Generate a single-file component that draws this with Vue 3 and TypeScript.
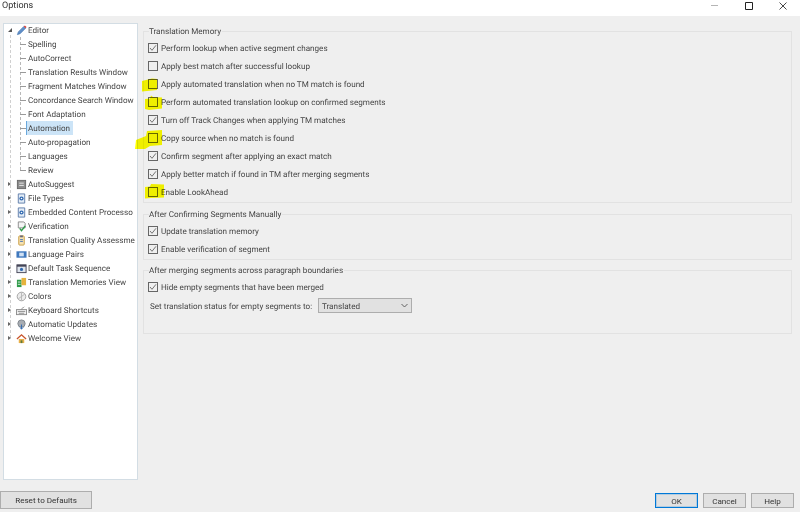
<script setup lang="ts">
interface Row { label: string; checked: boolean }
interface Node { label: string; icon: string }

const children: string[] = [
  'Spelling', 'AutoCorrect', 'Translation Results Window', 'Fragment Matches Window',
  'Concordance Search Window', 'Font Adaptation', 'Automation', 'Auto-propagation',
  'Languages', 'Review',
]
const roots: Node[] = [
  { label: 'AutoSuggest', icon: 'suggest' },
  { label: 'File Types', icon: 'file' },
  { label: 'Embedded Content Processo', icon: 'file' },
  { label: 'Verification', icon: 'verify' },
  { label: 'Translation Quality Assessme', icon: 'quality' },
  { label: 'Language Pairs', icon: 'pairs' },
  { label: 'Default Task Sequence', icon: 'task' },
  { label: 'Translation Memories View', icon: 'tm' },
  { label: 'Colors', icon: 'colors' },
  { label: 'Keyboard Shortcuts', icon: 'keyboard' },
  { label: 'Automatic Updates', icon: 'updates' },
  { label: 'Welcome View', icon: 'home' },
]
const tm: Row[] = [
  { label: 'Perform lookup when active segment changes', checked: true },
  { label: 'Apply best match after successful lookup', checked: false },
  { label: 'Apply automated translation when no TM match is found', checked: false },
  { label: 'Perform automated translation lookup on confirmed segments', checked: false },
  { label: 'Turn off Track Changes when applying TM matches', checked: true },
  { label: 'Copy source when no match is found', checked: false },
  { label: 'Confirm segment after applying an exact match', checked: true },
  { label: 'Apply better match if found in TM after merging segments', checked: true },
  { label: 'Enable LookAhead', checked: false },
]
const confirming: Row[] = [
  { label: 'Update translation memory', checked: true },
  { label: 'Enable verification of segment', checked: true },
]
</script>

<template>
  <div class="window">
    <header class="titlebar">
      <span class="title">Options</span>
      <div class="controls">
        <svg width="90" height="12" viewBox="0 0 90 12">
          <path d="M1 5.500h7" stroke="#b5b5b5" stroke-width="1" fill="none" />
          <path d="M35.500 2.500h7v7h-7z" stroke="#222" stroke-width="1" fill="none" />
          <path d="M69.500 2.500l7 7M76.500 2.500l-7 7" stroke="#333" stroke-width="0.900" fill="none" />
        </svg>
      </div>
    </header>

    <main class="body">
      <nav class="tree">
        <div class="guide"></div>
        <div class="node root">
          <span class="arrow open"></span>
          <svg class="icon" viewBox="0 0 12 12">
            <path d="M1.500 10.500l1-3 6-6 2 2-6 6z" fill="#5f8fc9" stroke="#3d6ca8" stroke-width="0.600" />
            <path d="M8.500 1.500l2 2 1-1.200-1.800-1.800z" fill="#d8433c" />
          </svg>
          <span>Editor</span>
        </div>
        <div class="children">
          <div v-for="c in children" :key="c" class="node child">
            <span class="stem"></span>
            <span class="child-label" :class="{ selected: c === 'Automation' }">{{ c }}</span>
          </div>
        </div>
        <div v-for="r in roots" :key="r.label" class="node root">
          <span class="arrow"></span>
          <svg class="icon" viewBox="0 0 12 12">
            <template v-if="r.icon === 'suggest'">
              <rect x="1.500" y="1.500" width="9" height="9" fill="#8c8c8c" stroke="#666" />
              <path d="M3.500 4.500h5M3.500 7h5" stroke="#eee" />
            </template>
            <template v-else-if="r.icon === 'file'">
              <path d="M2.500 1h7v10h-7z" fill="#e4edf7" stroke="#5b7ba8" />
              <circle cx="6" cy="6" r="2.300" fill="#2f68b0" />
              <circle cx="6" cy="6" r="0.900" fill="#fff" />
            </template>
            <template v-else-if="r.icon === 'verify'">
              <path d="M2.500 1h6l1.500 1.500v5H2.500z" fill="#f4f4f4" stroke="#888" />
              <path d="M4 8l2 2.500 4-5" fill="none" stroke="#2f9a4a" stroke-width="1.500" />
            </template>
            <template v-else-if="r.icon === 'quality'">
              <rect x="3" y="1" width="6" height="10" rx="1" fill="#f6e3b4" stroke="#c79a3e" />
              <rect x="4.500" y="0.500" width="3" height="2" fill="#667" />
              <path d="M4.500 5h3M4.500 7h3" stroke="#3f6fb0" />
            </template>
            <template v-else-if="r.icon === 'pairs'">
              <rect x="0.500" y="2.500" width="11" height="7" fill="#3f78bd" />
              <rect x="3.500" y="4" width="5" height="4" fill="#cfe0f3" />
            </template>
            <template v-else-if="r.icon === 'task'">
              <rect x="1" y="2" width="10" height="8.500" fill="#dfe6ee" stroke="#445" />
              <rect x="1" y="2" width="10" height="2" fill="#445" />
              <circle cx="6" cy="7" r="1.700" fill="#2f68b0" />
            </template>
            <template v-else-if="r.icon === 'tm'">
              <rect x="1" y="3" width="5" height="8" fill="#2f9a4a" />
              <path d="M2 5.500h3M2 8h3" stroke="#dff3e3" />
              <rect x="6" y="1" width="5" height="8" fill="#e6b33d" />
            </template>
            <template v-else-if="r.icon === 'colors'">
              <circle cx="6" cy="6" r="4.700" fill="#ececec" stroke="#a0a0a0" />
              <path d="M2.500 8.500l7-5M6 1.500v9" stroke="#b5b5b5" />
            </template>
            <template v-else-if="r.icon === 'keyboard'">
              <rect x="0.500" y="5" width="11" height="5.500" fill="#f2f2f2" stroke="#8a8a8a" />
              <path d="M2 7h8M3 9h6M6 5c0-2 2-1.500 3-3" stroke="#8a8a8a" fill="none" />
            </template>
            <template v-else-if="r.icon === 'updates'">
              <circle cx="6" cy="5" r="4" fill="#a8adb3" stroke="#7d838a" />
              <path d="M6 6v5M4 9l2 2 2-2" stroke="#2f68b0" fill="none" />
            </template>
            <template v-else>
              <path d="M1 6.500L6 2l5 4.500" fill="none" stroke="#c9552c" stroke-width="1.500" />
              <path d="M3 6.500h6v4.500H3z" fill="#e9b04a" />
              <rect x="5" y="8" width="2" height="3" fill="#5d7b3a" />
            </template>
          </svg>
          <span>{{ r.label }}</span>
        </div>
      </nav>

      <section class="panel">
        <div class="group first">
          <div class="legend">Translation Memory</div>
          <label v-for="r in tm" :key="r.label" class="row">
            <span class="box">
              <svg v-if="r.checked" viewBox="0 0 8 8" width="8" height="8">
                <path d="M1 4l2 2.300 4-5" fill="none" stroke="#666" stroke-width="0.900" />
              </svg>
            </span>
            <span>{{ r.label }}</span>
          </label>
        </div>

        <div class="group second">
          <div class="legend">After Confirming Segments Manually</div>
          <label v-for="r in confirming" :key="r.label" class="row">
            <span class="box">
              <svg viewBox="0 0 8 8" width="8" height="8">
                <path d="M1 4l2 2.300 4-5" fill="none" stroke="#666" stroke-width="0.900" />
              </svg>
            </span>
            <span>{{ r.label }}</span>
          </label>
        </div>

        <div class="group third">
          <div class="legend">After merging segments across paragraph boundaries</div>
          <label class="row">
            <span class="box">
              <svg viewBox="0 0 8 8" width="8" height="8">
                <path d="M1 4l2 2.300 4-5" fill="none" stroke="#666" stroke-width="0.900" />
              </svg>
            </span>
            <span>Hide empty segments that have been merged</span>
          </label>
          <div class="status">
            <span class="status-label">Set translation status for empty segments to:</span>
            <div class="select">
              <span>Translated</span>
              <svg width="7" height="5" viewBox="0 0 7 5">
                <path d="M0.500 1l3 3 3-3" fill="none" stroke="#555" stroke-width="0.900" />
              </svg>
            </div>
          </div>
        </div>
      </section>
    </main>

    <footer class="footer">
      <button class="btn reset" type="button">Reset to Defaults</button>
      <div class="actions">
        <button class="btn primary" type="button">OK</button>
        <button class="btn" type="button">Cancel</button>
        <button class="btn" type="button">Help</button>
      </div>
    </footer>

    <svg class="marker" width="800" height="512" viewBox="0 0 800 512">
      <path d="M142 81l10-2.500 5 .5v11l-15 1.500z" />
      <path d="M145 99l5-.5 1-3 2 1.500 9 .5v11l-13 1.500-4-1z" />
      <path d="M135 149l1-9 10-4 1-5 15-1v15l-12 1-5 3z" />
      <path d="M145 187l5-.5 1-2.500 13 .5v13l-13 .5-6 .5z" />
    </svg>
  </div>
</template>

<style>
html, body { margin: 0; background: #efefef; }
</style>

<style scoped>
.window {
  position: relative;
  width: 800px;
  height: 512px;
  display: flex;
  flex-direction: column;
  overflow: hidden;
  background: #efefef;
  font-family: Roboto, "Open Sans", sans-serif;
  font-size: 8.100px;
  text-rendering: geometricPrecision;
  color: #444;
}
.titlebar {
  height: 16px;
  flex: none;
  background: #fff;
  display: flex;
  align-items: center;
  justify-content: space-between;
}
.title { margin-left: 2px; font-size: 9px; color: #333; margin-top: -5px; }
.controls { margin-top: -5px; height: 12px; }
.body {
  flex: 1;
  display: flex;
  align-items: flex-start;
  padding-left: 3px;
  min-height: 0;
}
.tree {
  position: relative;
  box-sizing: border-box;
  width: 135px;
  height: 457px;
  margin-top: 7px;
  background: #fff;
  border: 1px solid #d3dde4;
  overflow: hidden;
  white-space: nowrap;
  flex: none;
}
.guide {
  position: absolute;
  left: 6px;
  top: 11px;
  height: 303px;
  border-left: 1px dashed #d0d0d0;
}
.node { display: flex; align-items: center; height: 14px; position: relative; }
.tree > .node:nth-child(2) { margin-top: -1px; }
.root { padding-left: 3px; }
.arrow {
  width: 0;
  height: 0;
  flex: none;
  margin-right: 5px;
  margin-left: 1px;
  border-left: 3px solid #666;
  border-top: 2.500px solid transparent;
  border-bottom: 2.500px solid transparent;
  position: relative;
}
.arrow.open {
  border-left: 4px solid transparent;
  border-top: 0;
  border-bottom: 4px solid #555;
  margin-right: 4px;
}
.icon { width: 11px; height: 11px; flex: none; margin-right: 1px; }
.children { position: relative; }
.children::before {
  content: "";
  position: absolute;
  left: 16px;
  top: 0;
  height: 133px;
  border-left: 1px dashed #b8b8b8;
}
.child { padding-left: 16px; }
.stem { width: 6px; flex: none; border-top: 1px dashed #9a9a9a; margin-right: 0; }
.child-label { padding: 0 2px; height: 14px; line-height: 14px; box-sizing: border-box; }
.child-label.selected {
  background: #cce4f7;
  border-left: 1px solid #6aa8dc;
  padding-left: 1px;
  width: 47px;
}
.panel {
  flex: none;
  width: 649px;
  margin-left: 5px;
  display: flex;
  flex-direction: column;
  margin-top: 15px;
}
.group {
  border: 1px solid #e2e2e2;
  padding-left: 4px;
  box-sizing: border-box;
}
.legend {
  margin-top: -7px;
  margin-left: 1px;
  width: fit-content;
  height: 14px;
  line-height: 13px;
  padding: 0 1px 0 0;
  background: #efefef;
}
.first { height: 172px; }
.second { height: 46px; margin-top: 11px; }
.third { height: 64px; margin-top: 10px; }
.row { display: flex; align-items: center; height: 18px; gap: 3px; line-height: 12px; }
.row > span:last-child { margin-top: -1px; }
.box {
  width: 10px;
  height: 10px;
  flex: none;
  box-sizing: border-box;
  border: 1px solid #666;
  display: flex;
  align-items: center;
  justify-content: center;
  margin-top: -1px;
}
.box svg { flex: none; }
.status { display: flex; align-items: center; height: 15px; margin-top: 2px; margin-left: 2px; }
.status-label { width: 168px; flex: none; white-space: nowrap; }
.select {
  width: 94px;
  height: 15px;
  box-sizing: border-box;
  background: #e1e1e1;
  border: 1px solid #adadad;
  display: flex;
  align-items: center;
  justify-content: space-between;
  padding: 0 3px;
}
.footer {
  height: 39px;
  flex: none;
  box-sizing: border-box;
  display: flex;
  align-items: flex-start;
  justify-content: space-between;
  padding-top: 18px;
  padding-right: 6px;
}
.actions { display: flex; gap: 5px; margin-top: 2px; }
.btn {
  width: 43px;
  height: 15px;
  box-sizing: border-box;
  padding: 0;
  background: #e1e1e1;
  border: 1px solid #adadad;
  font: inherit;
  color: #333;
}
.reset { width: 92px; height: 18px; }
.primary { border-color: #0078d7; box-shadow: inset 0 0 0 1px rgba(0, 120, 215, 0.2); }
.marker {
  position: absolute;
  left: 0;
  top: 0;
  fill: #ffff00;
  mix-blend-mode: multiply;
  pointer-events: none;
}
</style>
